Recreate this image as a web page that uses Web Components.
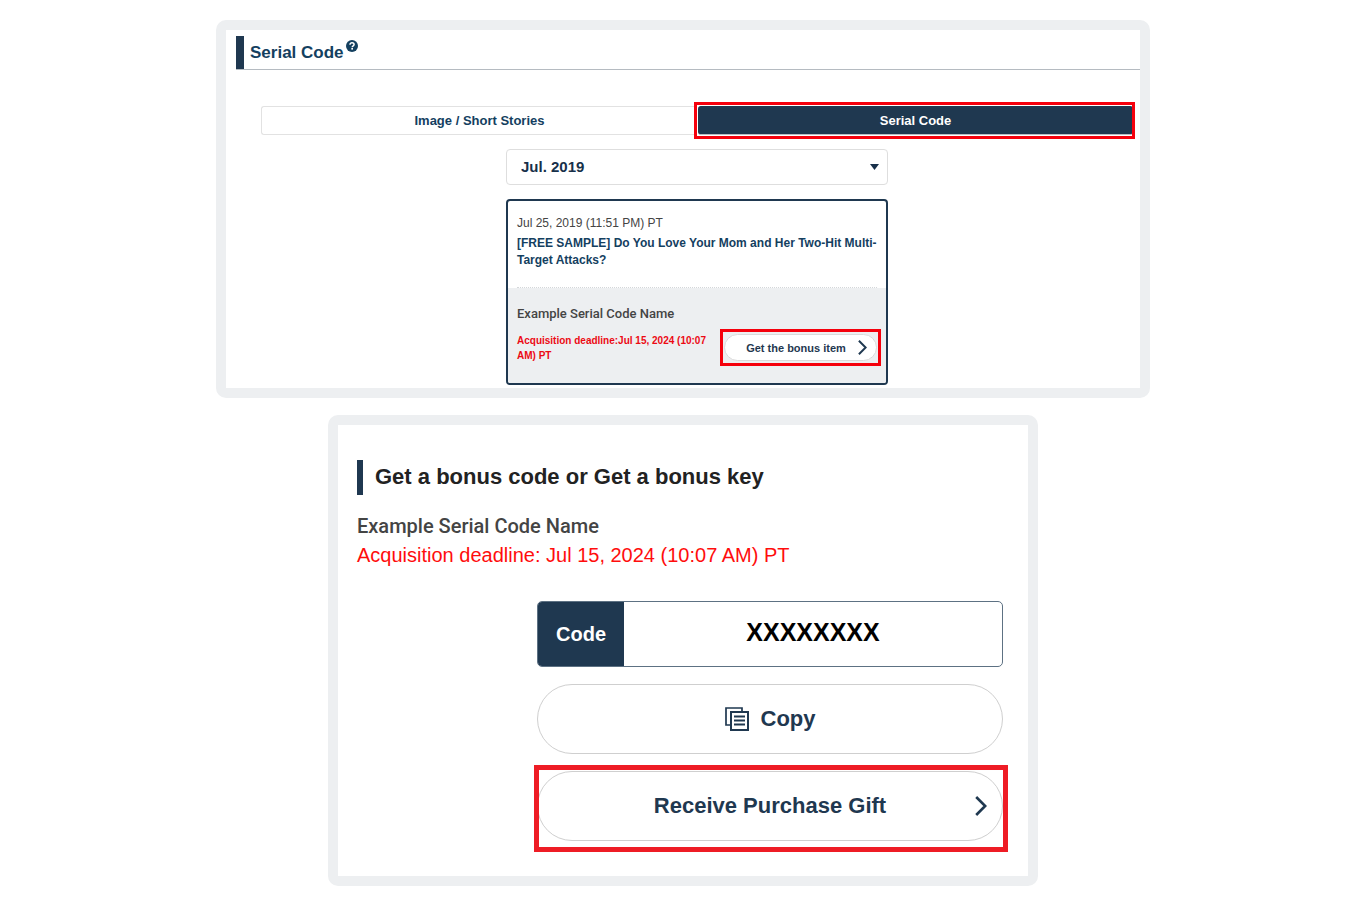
<!DOCTYPE html>
<html lang="en">
<head>
<meta charset="utf-8">
<meta name="viewport" content="width=device-width, initial-scale=1">
<title>Serial Code</title>
<style>
  :root {
    --navy: #1f3850;
    --ink: #14405f;
    --grey: #edeff1;
    --line: #e2e2e2;
    --red: #ee1c25;
    --deadline: #ff0d0d;
  }
  body {
    margin: 0;
    background: #fff;
    color: #222;
    font-family: "Liberation Sans", Arial, sans-serif;
  }
</style>
</head>
<body>
<serial-app></serial-app>

<script>
const define = (name, html) => {
  const template = document.createElement('template');
  template.innerHTML = `<style>*{box-sizing:border-box}</style>${html}`;
  customElements.define(name, class extends HTMLElement {
    constructor() {
      super();
      this.attachShadow({ mode: 'open' }).append(template.content.cloneNode(true));
    }
  });
};

/* Framed white panel with a thick pale border */
define('framed-panel', `
  <style>
    :host { display: block; width: 100%; padding: 10px; background: var(--grey); border-radius: 10px; box-sizing: border-box; }
    section { background: #fff; }
  </style>
  <section><slot></slot></section>`);

/* Red outline drawn over the control it wraps */
define('red-highlight', `
  <style>
    :host { display: block; position: relative; }
    :host::after {
      content: ""; position: absolute; pointer-events: none;
      inset: var(--spread, -5px); border: var(--weight, 3px) solid var(--mark, #f5000c);
    }
  </style>
  <slot></slot>`);

define('chevron-icon', `
  <style>
    :host { display: block; width: 9px; height: 15px; color: var(--navy); }
    svg { display: block; width: 100%; height: 100%; }
  </style>
  <svg viewBox="0 0 12 20" fill="none" stroke="currentColor" stroke-width="2.6" aria-hidden="true"><path d="M1.2 1 L10.2 10 L1.2 19"/></svg>`);

define('page-title', `
  <style>
    :host { display: block; border-bottom: 1px solid #b5bbc1; }
    h1 {
      display: flex; align-items: center; gap: 2px; margin: 0; height: 33px;
      border-left: 8px solid var(--navy); padding-left: 6px;
      font-size: 17px; line-height: 20px; color: var(--ink);
    }
    a { align-self: flex-start; display: block; margin-top: 4px; }
    svg { display: block; width: 12px; height: 12px; }
  </style>
  <h1><slot></slot>
    <a href="#help" aria-label="Help"><svg viewBox="0 0 12 12"><circle cx="6" cy="6" r="6" fill="#14405f"/><path d="M4 4.7C4 3.4 4.9 2.8 6 2.8s2.1.7 2.1 1.8C8.100 5.800 6.200 5.900 6.200 7.200" fill="none" stroke="#fff" stroke-width="1.5"/><rect x="5.300" y="8" width="1.700" height="1.600" fill="#fff"/></svg></a>
  </h1>`);

define('code-tabs', `
  <style>
    nav { display: grid; grid-template-columns: 1fr 1fr; }
    button {
      display: block; width: 100%; height: 29px; margin: 0; padding: 0;
      font: bold 13px/18px "Liberation Sans", Arial, sans-serif;
      color: var(--ink); background: #fff; border: 1px solid var(--line); border-right: 0; border-radius: 3px 0 0 3px;
    }
    button.on { color: #fff; background: var(--navy); border: 0; border-top: 1px solid var(--navy); border-bottom: 1px solid #b9bdc1; border-radius: 3px; }
    .current { margin-left: 1px; --spread: -4px -2px -4px -4px; }
  </style>
  <nav>
    <button type="button">Image / Short Stories</button>
    <red-highlight class="current"><button class="on" type="button" aria-pressed="true">Serial Code</button></red-highlight>
  </nav>`);

define('month-picker', `
  <style>
    :host { display: block; }
    label { display: grid; align-items: center; }
    select, svg { grid-area: 1 / 1; }
    select {
      appearance: none; width: 100%; height: 36px; margin: 0; padding: 0 14px;
      font: bold 15px/20px "Liberation Sans", Arial, sans-serif;
      color: #17304a; background: #fff; border: 1px solid #dedede; border-radius: 4px;
    }
    svg { justify-self: end; width: 9px; height: 6px; margin-right: 9px; pointer-events: none; }
  </style>
  <label><select aria-label="Month"><option>Jul. 2019</option></select>
    <svg viewBox="0 0 9 6" aria-hidden="true"><path d="M0 0h9L4.500 6z" fill="#17304a"/></svg></label>`);

define('bonus-entry', `
  <style>
    :host { display: block; border: 2px solid var(--navy); border-radius: 4px; overflow: hidden; box-sizing: border-box; }
    header { margin: 0 9px; height: 87px; padding-top: 13px; border-bottom: 1px dotted #d4d7da; }
    time { display: block; font-size: 12px; line-height: 18px; color: #444; }
    h2 { margin: 3px 0 0; font-size: 12px; line-height: 17px; }
    h2 a { color: var(--ink); text-decoration: none; }
    .item { height: 95px; padding: 16px 9px 0; background: var(--grey); }
    h3 { margin: 0 0 9px; font: 500 13px/20px Roboto, "Liberation Sans", Arial, sans-serif; color: #444; }
    .row { display: flex; justify-content: space-between; align-items: flex-start; gap: 8px; }
    p { margin: 0; font-size: 10px; line-height: 15px; font-weight: bold; color: #ec0a14; }
    red-highlight { flex: none; width: 153px; margin-top: 1px; --spread: -5px -4px; }
    button {
      display: grid; grid-template-columns: 1fr auto; align-items: center; width: 100%; height: 27px;
      padding: 0 9px; border: 1px solid #dadada; border-radius: 14px; background: #fff;
      font: bold 11px/16px "Liberation Sans", Arial, sans-serif; color: var(--navy);
    }
  </style>
  <header>
    <time datetime="2019-07-25T23:51">Jul 25, 2019 (11:51 PM) PT</time>
    <h2><a href="#title">[FREE SAMPLE] Do You Love Your Mom and Her Two-Hit Multi-Target Attacks?</a></h2>
  </header>
  <div class="item">
    <h3>Example Serial Code Name</h3>
    <div class="row">
      <p>Acquisition deadline:Jul 15, 2024 (10:07 AM) PT</p>
      <red-highlight><button type="button"><span>Get the bonus item</span><chevron-icon></chevron-icon></button></red-highlight>
    </div>
  </div>`);

define('serial-list', `
  <style>
    :host { display: block; padding: 6px 0 3px 10px; }
    .body { padding: 36px 7px 0 25px; }
    .column { display: grid; gap: 14px; max-width: 382px; margin: 14px auto 0; }
  </style>
  <page-title>Serial Code</page-title>
  <div class="body">
    <code-tabs></code-tabs>
    <div class="column">
      <month-picker></month-picker>
      <bonus-entry></bonus-entry>
    </div>
  </div>`);

define('bonus-code', `
  <style>
    :host { display: block; padding: 35px 25px 35px 19px; }
    h2 { margin: 0; height: 35px; padding-left: 12px; border-left: 6px solid var(--navy); font-size: 22px; line-height: 34px; color: #222; }
    h3 { margin: 18px 0 0; font: 500 20px/26px Roboto, "Liberation Sans", Arial, sans-serif; color: #444; }
    p { margin: 4px 0 0; font-size: 20px; line-height: 24px; color: var(--deadline); }
    .actions { display: grid; gap: 17px; max-width: 466px; margin: 34px 0 0 auto; }
    .code { display: flex; height: 66px; border: 1px solid #5d7183; border-radius: 5px; overflow: hidden; }
    .code label { flex: none; width: 86px; background: var(--navy); color: #fff; font-size: 20px; font-weight: bold; line-height: 64px; text-align: center; }
    .code output { flex: 1; color: #000; font-size: 25px; font-weight: bold; line-height: 60px; text-align: center; }
    button {
      display: flex; align-items: center; justify-content: center; gap: 12px; width: 100%; height: 70px; padding: 0 15px;
      background: #fff; border: 1px solid #cfcfcf; border-radius: 35px;
      font: bold 22px/28px "Liberation Sans", Arial, sans-serif; color: var(--navy);
    }
    .copy svg { width: 24px; height: 24px; }
    .gift { display: grid; grid-template-columns: 12px 1fr 12px; }
    chevron-icon { width: 12px; height: 20px; }
    red-highlight { --spread: -6px -5px -11px -3px; --weight: 5px; --mark: var(--red); }
  </style>
  <h2>Get a bonus code or Get a bonus key</h2>
  <h3>Example Serial Code Name</h3>
  <p>Acquisition deadline: Jul 15, 2024 (10:07 AM) PT</p>
  <div class="actions">
    <div class="code"><label for="code">Code</label><output id="code">XXXXXXXX</output></div>
    <button class="copy" type="button">
      <svg viewBox="0 0 24 24" fill="none" stroke="#1f3850" aria-hidden="true"><path d="M5 18H1V1H17V4" stroke-width="1.700"/><rect x="6" y="5" width="17" height="18" stroke-width="2"/><path d="M9 9.500H20M9 13.500H20M9 17.500H20" stroke-width="2"/></svg>
      <span>Copy</span>
    </button>
    <red-highlight><button class="gift" type="button"><i></i><span>Receive Purchase Gift</span><chevron-icon></chevron-icon></button></red-highlight>
  </div>`);

define('serial-app', `
  <style>
    :host { display: block; padding: 20px; }
    main { display: grid; justify-items: center; gap: 17px; }
    .list { max-width: 934px; }
    .detail { max-width: 710px; }
  </style>
  <main>
    <framed-panel class="list"><serial-list></serial-list></framed-panel>
    <framed-panel class="detail"><bonus-code></bonus-code></framed-panel>
  </main>`);
</script>
</body>
</html>
